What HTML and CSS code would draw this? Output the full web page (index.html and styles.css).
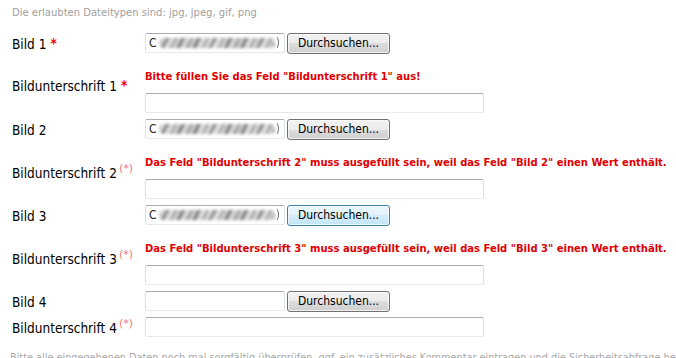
FILE: index.html
```html
<html>
  <head>
    <title>Bilder hochladen</title>
    <link rel="stylesheet" href="styles.css">
  </head>
<body>
  <p class="hint">Die erlaubten Dateitypen sind: jpg, jpeg, gif, png</p>

  <div class="upload-form">
    <div class="row">
      <div class="label">Bild 1<span class="req">*</span></div>
      <div class="field">
        <span class="file"><span class="drive">C</span><span class="smudge"></span><span class="end">)</span></span>
        <button class="browse">Durchsuchen...</button>
      </div>
    </div>
    <div class="row">
      <div class="label">Bildunterschrift 1<span class="req">*</span></div>
      <div class="field stack">
        <div class="error">Bitte füllen Sie das Feld "Bildunterschrift 1" aus!</div>
        <input class="text" type="text">
      </div>
    </div>

    <div class="row">
      <div class="label">Bild 2</div>
      <div class="field">
        <span class="file"><span class="drive">C</span><span class="smudge"></span><span class="end">)</span></span>
        <button class="browse">Durchsuchen...</button>
      </div>
    </div>
    <div class="row">
      <div class="label">Bildunterschrift 2<span class="opt">(*)</span></div>
      <div class="field stack">
        <div class="error">Das Feld "Bildunterschrift 2" muss ausgefüllt sein, weil das Feld "Bild 2" einen Wert enthält.</div>
        <input class="text" type="text">
      </div>
    </div>

    <div class="row">
      <div class="label">Bild 3</div>
      <div class="field">
        <span class="file"><span class="drive">C</span><span class="smudge"></span><span class="end">)</span></span>
        <button class="browse focus">Durchsuchen...</button>
      </div>
    </div>
    <div class="row">
      <div class="label">Bildunterschrift 3<span class="opt">(*)</span></div>
      <div class="field stack">
        <div class="error">Das Feld "Bildunterschrift 3" muss ausgefüllt sein, weil das Feld "Bild 3" einen Wert enthält.</div>
        <input class="text" type="text">
      </div>
    </div>

    <div class="row">
      <div class="label">Bild 4</div>
      <div class="field">
        <span class="file"></span>
        <button class="browse">Durchsuchen...</button>
      </div>
    </div>
    <div class="row">
      <div class="label">Bildunterschrift 4<span class="opt">(*)</span></div>
      <div class="field stack">
        <input class="text" type="text">
      </div>
    </div>
  </div>

  <p class="note">Bitte alle eingegebenen Daten noch mal sorgfältig überprüfen, ggf. ein zusätzliches Kommentar eintragen und die Sicherheitsabfrage be</p>
</body>
</html>
```

FILE: styles.css
```css
html { background: #fff; color: #000; }

body {
  margin: 0;
  padding: 6px 0 0 12px;
  font-family: "DejaVu Sans Condensed", "DejaVu Sans", sans-serif;
  font-stretch: condensed;
  font-size: 13.5px;
  overflow: hidden;
  white-space: nowrap;
}

p.hint {
  margin: 0;
  font-family: "DejaVu Sans", sans-serif;
  font-stretch: normal;
  font-size: 10px;
  line-height: 13px;
  color: #a0a0a0;
}

.upload-form { margin-top: 11px; }

.row {
  display: grid;
  grid-template-columns: 133px 1fr;
  align-items: center;
  padding: 3px 0 2px;
}
.row:has(.stack) { padding: 3px 0; }

.label { line-height: 16px; }

.req {
  color: #e00;
  font-weight: bold;
  margin-left: 4px;
  position: relative;
  top: -1px;
}

.opt {
  font-family: "DejaVu Sans", sans-serif;
  font-stretch: normal;
  font-size: 11px;
  color: #f07878;
  margin-left: 2px;
  vertical-align: 6px;
  line-height: 10px;
}

.field { display: flex; align-items: flex-start; gap: 2px; }
.field.stack { flex-direction: column; gap: 0; }

.file, input.text {
  box-sizing: border-box;
  height: 20px;
  background: #fff;
  border: 1px solid #dbdfe6;
  border-top-color: #abadb3;
  border-bottom-color: #e3e9ef;
  border-radius: 2px;
}

.file {
  width: 140px;
  display: flex;
  align-items: center;
  padding: 0 4px 0 3px;
  overflow: hidden;
  font-size: 12px;
}
.file .drive { color: #222; }
.file .smudge {
  flex: 1;
  height: 10px;
  margin: 0 1px 0 2px;
  border-radius: 5px;
  background:
    repeating-linear-gradient(-62deg, rgba(80, 80, 80, 0.5) 0 3px, rgba(255, 255, 255, 0.35) 3px 7px, rgba(120, 120, 120, 0.4) 7px 9px, rgba(255, 255, 255, 0.5) 9px 14px),
    linear-gradient(90deg, #bdbdbd, #a9a9a9 30%, #c8c8c8 45%, #a5a5a5 65%, #c2c2c2 85%, #b0b0b0);
  filter: blur(1.6px);
}
.file .end { color: #777; filter: blur(0.5px); }

input.text {
  width: 339px;
  margin: 0;
  padding: 0 3px;
  outline: none;
}

button.browse {
  box-sizing: border-box;
  width: 103px;
  height: 21px;
  margin: 0;
  padding: 0 0 1px;
  font: inherit;
  font-size: 12px;
  color: #000;
  border: 1px solid #707070;
  border-radius: 3px;
  background: linear-gradient(#f2f2f2, #ebebeb 50%, #dddddd 50%, #cfcfcf);
  box-shadow: inset 0 0 0 1px rgba(255, 255, 255, 0.7);
}
button.browse.focus {
  border-color: #3c7fb1;
  background: linear-gradient(#eaf6fd, #e3f3fc 50%, #d2ecfa 50%, #c4e5f7);
}

.error {
  margin: 11px 0 10px;
  line-height: 13px;
  font-family: "DejaVu Sans", sans-serif;
  font-stretch: normal;
  font-size: 10px;
  font-weight: bold;
  color: #e00000;
}

p.note {
  margin: 11px 0 0 -2px;
  font-size: 10.8px;
  line-height: 14px;
  color: #a8a8a8;
}
```
